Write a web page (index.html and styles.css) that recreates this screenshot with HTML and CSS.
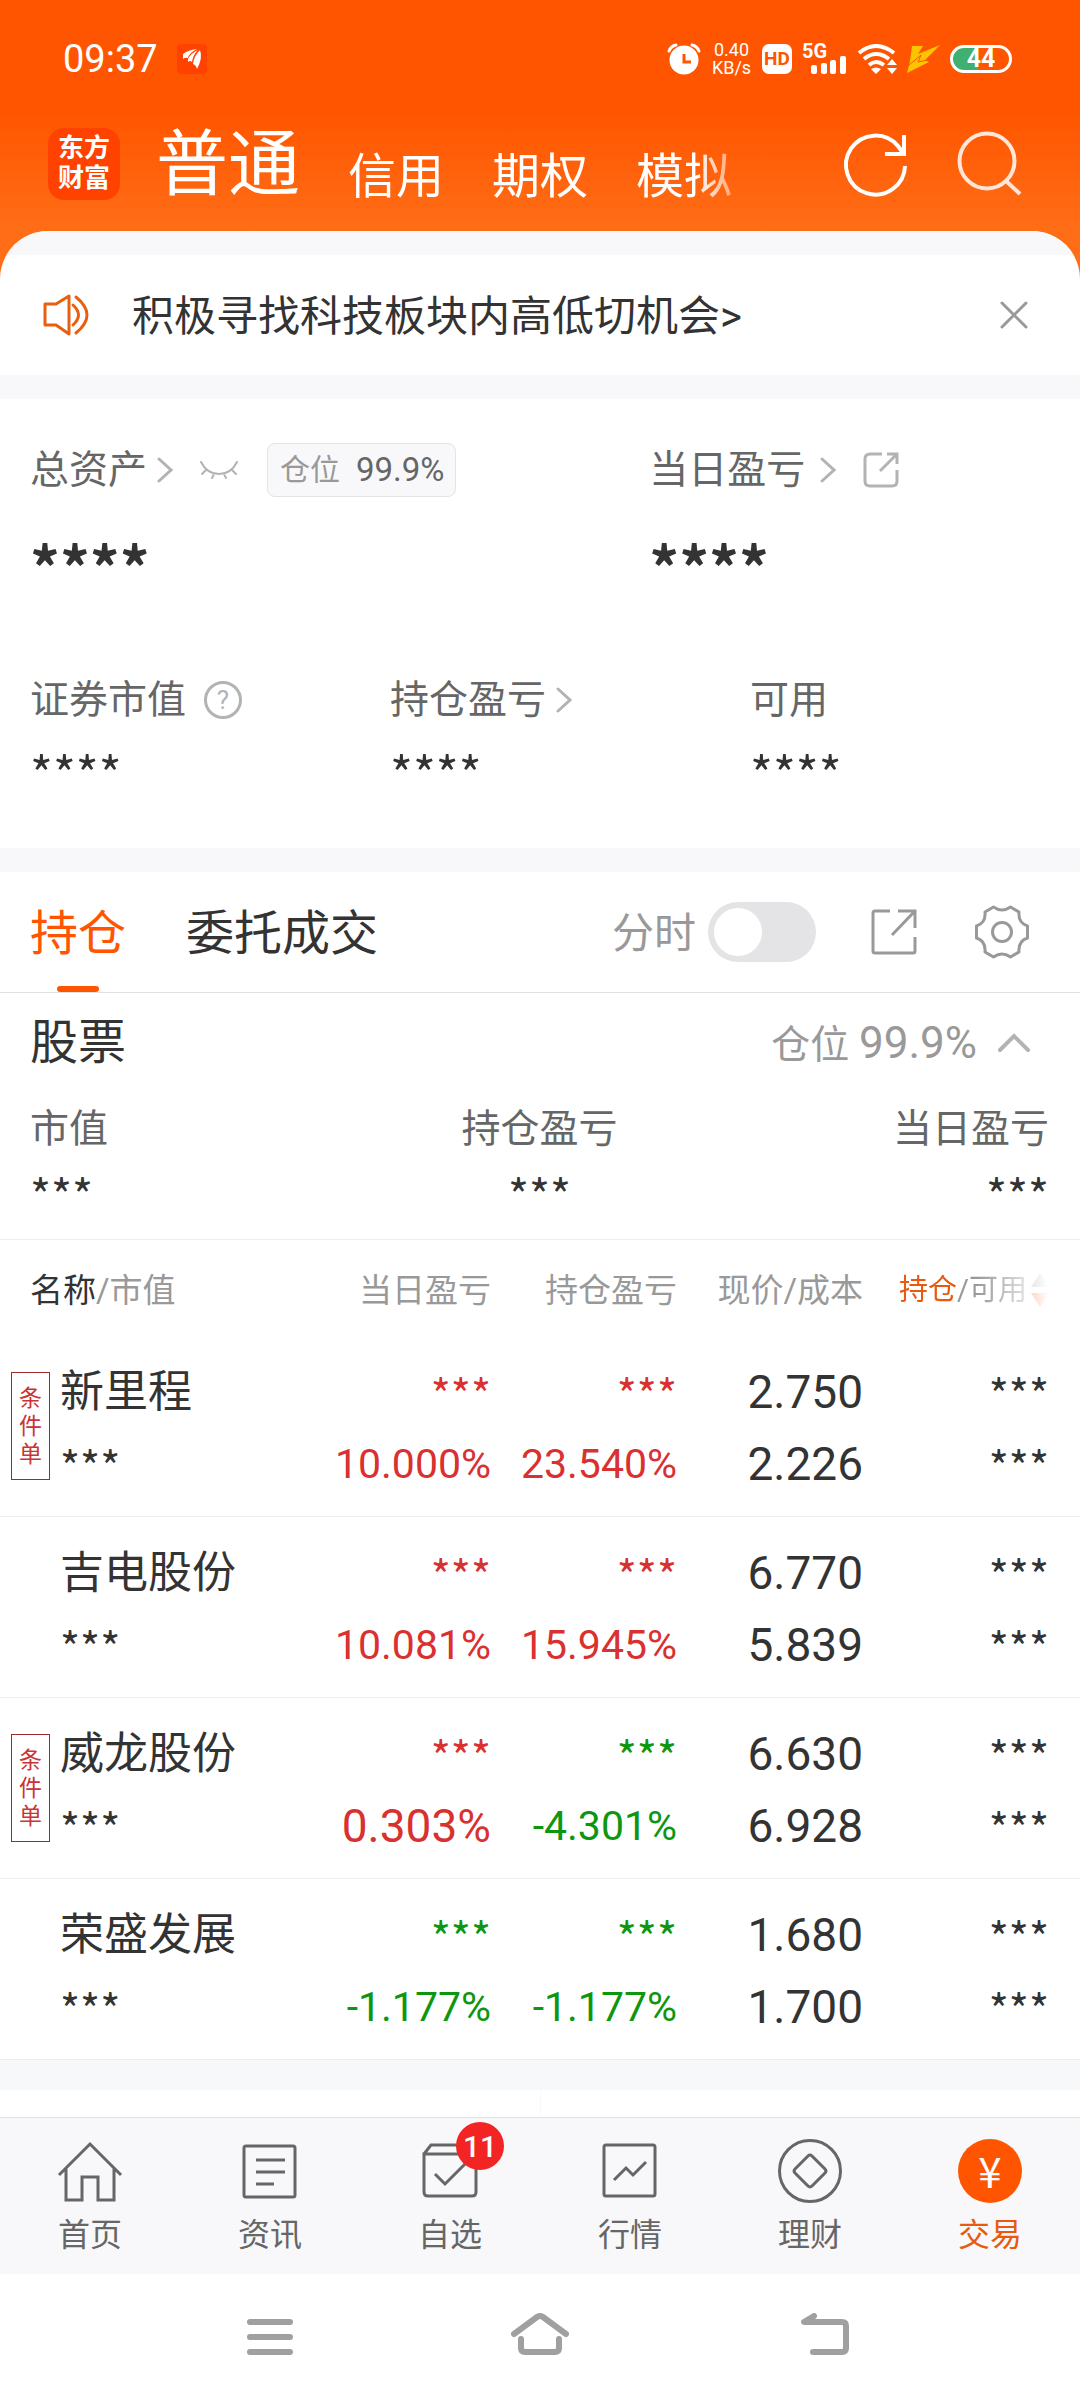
FILE: index.html
```
<!DOCTYPE html>
<html lang="zh">

<head>
    <meta charset="UTF-8">
    <meta name="viewport" content="width=device-width, initial-scale=1.0">
    <title>东方财富 - 交易</title>
    <link rel="stylesheet" href="styles.css">
</head>

<body>
    <!-- 状态栏 -->
    <div class="status-bar">
        <span class="time">09:37</span>
        <svg class="app-mark" width="30" height="30" viewBox="0 0 30 30">
            <rect width="30" height="30" rx="4" fill="#ff4200"/>
            <path d="M6 10Q11 6 20 5Q12 9 11 14Q8 13 6 15ZM11 15Q14 9 21 6Q16 11 15 18Q13 16 11 18ZM16 20Q17 12 23 6Q26 14 20 25Q19 21 16 20Z" fill="#fff"/>
        </svg>
        <div class="status-icons">
            <svg width="34" height="32" viewBox="0 0 34 32">
                <circle cx="17" cy="17" r="14.500" fill="#fff"/>
                <path d="M2 8Q4 3 9 2M32 8Q30 3 25 2" fill="none" stroke="#fff" stroke-width="3" stroke-linecap="round"/>
                <path d="M17 11V19H24" fill="none" stroke="#ff5500" stroke-width="3"/>
            </svg>
            <div class="speed"><span>0.40</span><span>KB/s</span></div>
            <span class="hd">HD</span>
            <span class="signal">
                <span class="net">5G</span>
                <svg width="36" height="18" viewBox="0 0 36 18" fill="#fff">
                    <rect x="0" y="9" width="6" height="9" rx="2"/>
                    <rect x="10" y="7" width="6" height="11" rx="2"/>
                    <rect x="19" y="4" width="6" height="14" rx="2"/>
                    <rect x="29" y="0" width="6" height="18" rx="2"/>
                </svg>
            </span>
            <svg width="40" height="30" viewBox="0 0 40 30">
                <path d="M2 9Q19 -5 37 9M7 15Q19 5 32 15M12 21Q19 15 27 21" fill="none" stroke="#fff" stroke-width="4"/>
                <path d="M14 25Q19 22 24 25L19 30ZM30 21L35 15L40 21ZM30 24H40L35 30Z" fill="#fff"/>
            </svg>
            <svg width="33" height="28" viewBox="0 0 33 28">
                <path d="M5 1H16L11 9L33 0L18 15L22 17L0 28L3 16Z" fill="#ffc400"/>
                <path d="M2 20L14 10L11 17L21 15" fill="none" stroke="#ff5500" stroke-width="1"/>
            </svg>
            <span class="battery">44</span>
        </div>
    </div>

    <!-- 顶部导航 -->
    <header class="header">
        <a class="logo" href="#">东方<br>财富</a>
        <nav class="account-tabs">
            <a class="active" href="#">普通</a>
            <a href="#">信用</a>
            <a href="#">期权</a>
            <a href="#">模拟</a>
        </nav>
        <button class="icon-btn" type="button" aria-label="刷新">
            <svg width="72" height="72" viewBox="0 0 72 72" fill="none" stroke="#fff" stroke-width="4">
                <path d="M65 38A29.500 29.500 0 1 1 58 18L63 25"/>
                <path d="M64 7V26H45"/>
            </svg>
        </button>
        <button class="icon-btn" type="button" aria-label="搜索">
            <svg width="72" height="72" viewBox="0 0 72 72" fill="none" stroke="#ffe6d8" stroke-width="4">
                <circle cx="33" cy="33" r="27.500"/>
                <path d="M52 53L66 66"/>
            </svg>
        </button>
    </header>

    <main class="panel">
        <!-- 公告 -->
        <section class="notice">
            <svg width="48" height="44" viewBox="0 0 48 44" fill="none" stroke="#e8600f" stroke-width="3" stroke-linejoin="round" stroke-linecap="round">
                <path d="M3 11H14L27 3V41L14 32H3ZM31 12Q42 22 31 32M34 4Q56 22 34 40"/>
            </svg>
            <a href="#">积极寻找科技板块内高低切机会&gt;</a>
            <button class="icon-btn" type="button" aria-label="关闭">
                <svg width="30" height="30" viewBox="0 0 30 30" stroke="#999" stroke-width="3" stroke-linecap="round">
                    <path d="M3 3L27 27M27 3L3 27"/>
                </svg>
            </button>
        </section>

        <!-- 资产 -->
        <section class="assets">
            <div class="assets-main">
                <div>
                    <div class="label">
                        <a href="#">总资产</a>
                        <svg class="chevron" width="16" height="26" viewBox="0 0 16 26"><path d="M2 2L14 13L2 24"/></svg>
                        <button class="icon-btn eye" type="button" aria-label="显示资产">
                            <svg width="40" height="20" viewBox="0 0 40 20" fill="none" stroke="#b3b3b3" stroke-width="2" stroke-linecap="round">
                                <path d="M2 2Q8 14 20 14Q32 14 38 2M7 10L3 14M15 14L13 18M25 14L27 18M33 10L37 14"/>
                            </svg>
                        </button>
                        <span class="position-badge">仓位 <b>99.9%</b></span>
                    </div>
                    <div class="mask mask-lg">****</div>
                </div>
                <div>
                    <div class="label">
                        <a href="#">当日盈亏</a>
                        <svg class="chevron chevron-wide" width="16" height="26" viewBox="0 0 16 26"><path d="M2 2L14 13L2 24"/></svg>
                        <button class="icon-btn share" type="button" aria-label="分享">
                            <svg width="36" height="36" viewBox="0 0 36 36" fill="none" stroke="#b3b3b3" stroke-width="3">
                                <path d="M19 2H7Q2 2 2 7V29Q2 34 7 34H29Q34 34 34 29V18M17 19L33 3M24 2H34V12"/>
                            </svg>
                        </button>
                    </div>
                    <div class="mask mask-lg">****</div>
                </div>
            </div>
            <div class="assets-sub">
                <div>
                    <div class="label">证券市值<button class="help" type="button">?</button></div>
                    <div class="mask mask-md">****</div>
                </div>
                <div>
                    <div class="label">
                        <a href="#">持仓盈亏</a>
                        <svg class="chevron" width="16" height="26" viewBox="0 0 16 26"><path d="M2 2L14 13L2 24"/></svg>
                    </div>
                    <div class="mask mask-md">****</div>
                </div>
                <div>
                    <div class="label">可用</div>
                    <div class="mask mask-md">****</div>
                </div>
            </div>
        </section>

        <!-- 持仓 / 委托 -->
        <div class="tabs">
            <a class="tab active" href="#">持仓</a>
            <a class="tab" href="#">委托成交</a>
            <label class="switch-label" for="minute">分时</label>
            <input class="switch" id="minute" type="checkbox">
            <button class="icon-btn" type="button" aria-label="分享持仓">
                <svg width="48" height="48" viewBox="0 0 48 48" fill="none" stroke="#999" stroke-width="3">
                    <path d="M20 3H5Q3 3 3 5V43Q3 45 5 45H43Q45 45 45 43V29M22 27L44 4M28 3H45V20"/>
                </svg>
            </button>
            <button class="icon-btn gear" type="button" aria-label="设置">
                <svg width="54" height="54" viewBox="0 0 54 54" fill="none" stroke="#999" stroke-width="3" stroke-linejoin="round">
                    <path d="M18.500 2Q27 8 35.500 2L44 7Q43 18 52.500 21V33Q43 36 44 47L35.500 52Q27 46 18.500 52L10 47Q11 36 1.500 33V21Q11 18 10 7Z"/>
                    <circle cx="27" cy="27" r="9.500"/>
                </svg>
            </button>
        </div>

        <section class="summary">
            <div class="summary-head">
                <h2>股票</h2>
                <span class="ratio">仓位 <b>99.9%</b></span>
                <button class="icon-btn" type="button" aria-label="收起">
                    <svg width="34" height="20" viewBox="0 0 34 20" fill="none" stroke="#b3b3b3" stroke-width="4" stroke-linecap="round">
                        <path d="M3 17L17 3L31 17"/>
                    </svg>
                </button>
            </div>
            <div class="summary-grid">
                <div>市值<div class="mask">***</div></div>
                <div>持仓盈亏<div class="mask">***</div></div>
                <div>当日盈亏<div class="mask">***</div></div>
            </div>
        </section>

        <table class="holdings">
            <colgroup>
                <col>
                <col class="num">
                <col class="num">
                <col class="num">
                <col class="last">
            </colgroup>
            <thead>
                <tr>
                    <th><em>名称</em>/市值</th>
                    <th>当日盈亏</th>
                    <th>持仓盈亏</th>
                    <th>现价/成本</th>
                    <th>
                        <div class="sort">
                            <span><i>持仓</i>/可用</span>
                            <svg width="18" height="34" viewBox="0 0 18 34"><path d="M9 0L18 14H0Z" fill="#999"/><path d="M9 34L0 20H18Z" fill="#ff5500"/></svg>
                        </div>
                    </th>
                </tr>
            </thead>
            <tbody>
                <tr>
                    <td>
                        <div class="stock">
                            <span class="tag">条件单</span>
                            <div class="name">新里程<div class="mask">***</div></div>
                        </div>
                    </td>
                    <td class="up"><div class="mask">***</div>10.000%</td>
                    <td class="up"><div class="mask">***</div>23.540%</td>
                    <td class="price">2.750<br>2.226</td>
                    <td><div class="mask">***</div><div class="mask">***</div></td>
                </tr>
                <tr>
                    <td>
                        <div class="stock">
                            <div class="name">吉电股份<div class="mask">***</div></div>
                        </div>
                    </td>
                    <td class="up"><div class="mask">***</div>10.081%</td>
                    <td class="up"><div class="mask">***</div>15.945%</td>
                    <td class="price">6.770<br>5.839</td>
                    <td><div class="mask">***</div><div class="mask">***</div></td>
                </tr>
                <tr>
                    <td>
                        <div class="stock">
                            <span class="tag">条件单</span>
                            <div class="name">威龙股份<div class="mask">***</div></div>
                        </div>
                    </td>
                    <td class="up large"><div class="mask">***</div>0.303%</td>
                    <td class="down"><div class="mask">***</div>-4.301%</td>
                    <td class="price">6.630<br>6.928</td>
                    <td><div class="mask">***</div><div class="mask">***</div></td>
                </tr>
                <tr>
                    <td>
                        <div class="stock">
                            <div class="name">荣盛发展<div class="mask">***</div></div>
                        </div>
                    </td>
                    <td class="down"><div class="mask">***</div>-1.177%</td>
                    <td class="down"><div class="mask">***</div>-1.177%</td>
                    <td class="price">1.680<br>1.700</td>
                    <td><div class="mask">***</div><div class="mask">***</div></td>
                </tr>
            </tbody>
        </table>
        <div class="next-card"><div></div><div></div></div>
    </main>

    <!-- 底部导航 -->
    <nav class="tabbar">
        <a href="#">
            <svg width="66" height="66" viewBox="0 0 66 66">
                <path d="M2 37L33 6L64 37M9 31V62H25V39H41V62H57V31"/>
            </svg>
            首页
        </a>
        <a href="#">
            <svg width="66" height="66" viewBox="0 0 66 66">
                <rect x="7" y="8" width="51" height="51" rx="2"/>
                <path d="M19 22H48M19 34H48M19 46H37"/>
            </svg>
            资讯
        </a>
        <a href="#">
            <svg width="66" height="66" viewBox="0 0 66 66">
                <path d="M7 16V54Q7 58 11 58H55Q59 58 59 54V16ZM7 16L14 7H52L59 16M18 36L28 46L48 26"/>
            </svg>
            自选
            <span class="badge">11</span>
        </a>
        <a href="#">
            <svg width="66" height="66" viewBox="0 0 66 66">
                <rect x="7" y="7" width="51" height="51" rx="2"/>
                <path d="M17 42L29 30L36 37L49 24"/>
            </svg>
            行情
        </a>
        <a href="#">
            <svg width="66" height="66" viewBox="0 0 66 66">
                <circle cx="33" cy="33" r="30.500"/>
                <path d="M31 18Q33 16 35 18L48 31Q50 33 48 35L35 48Q33 50 31 48L18 35Q16 33 18 31Z"/>
            </svg>
            理财
        </a>
        <a class="active" href="#">
            <span class="yen">¥</span>
            交易
        </a>
    </nav>

    <!-- 系统按键 -->
    <div class="system-nav">
        <button class="icon-btn" type="button" aria-label="菜单">
            <svg width="60" height="48" viewBox="0 0 60 48"><path d="M10 9H50M10 24H50M10 39H50"/></svg>
        </button>
        <button class="icon-btn" type="button" aria-label="主页">
            <svg width="60" height="48" viewBox="0 0 60 48"><path d="M4 21L27 4Q30 2 33 4L56 21M11 26V35Q11 39 15 39H45Q49 39 49 35V26"/></svg>
        </button>
        <button class="icon-btn" type="button" aria-label="返回">
            <svg width="90" height="48" viewBox="0 0 90 48"><path d="M49 3L39 9H77Q81 9 81 13V35Q81 39 77 39H48"/></svg>
        </button>
    </div>
</body>

</html>
```

FILE: styles.css
```
* {
    box-sizing: border-box;
}

body {
    margin: 0;
    font-family: Roboto, "Noto Sans CJK SC", sans-serif;
    line-height: 1.2;
    color: #333;
    background: #fff linear-gradient(#ff5500 110px, #ff6e17 232px) no-repeat;
    background-size: 100% 300px;
}

a {
    color: inherit;
    text-decoration: none;
}

svg {
    display: block;
    flex: none;
}

b,
em,
i {
    font-weight: 400;
    font-style: normal;
}

.icon-btn {
    padding: 0;
    border: 0;
    background: none;
}

/* Hidden amounts */
.mask {
    font-family: "Noto Sans CJK SC", sans-serif;
    font-size: 43px;
}

/* Status bar */
.status-bar {
    display: flex;
    align-items: center;
    padding: 34px 68px 0 63px;
    height: 84px;
    color: #fff;
}

.time {
    font-size: 38px;
    line-height: 48px;
}

.app-mark {
    margin-left: 19px;
}

.status-icons {
    display: flex;
    align-items: center;
    gap: 10px;
    margin-left: auto;
}

.speed {
    display: flex;
    flex-direction: column;
    width: 41px;
    font-size: 18px;
    line-height: 18px;
    text-align: center;
}

.hd {
    width: 30px;
    border-radius: 7px;
    background: #fff;
    color: #ff5500;
    font-size: 19px;
    font-weight: 700;
    line-height: 30px;
    text-align: center;
}

.signal {
    display: flex;
    flex-direction: column;
    align-items: flex-end;
    width: 45px;
}

.net {
    align-self: flex-start;
    height: 12px;
    font-size: 20px;
    font-weight: 700;
    line-height: 14px;
}

.battery {
    width: 62px;
    border: 3px solid #fff;
    border-radius: 14px;
    background: linear-gradient(to right, #3fb070 44%, #ff5500 44%);
    font-size: 25px;
    font-weight: 700;
    line-height: 22px;
    text-align: center;
}

/* Header */
.header {
    display: flex;
    align-items: center;
    padding: 12px 54px 0 48px;
    height: 147px;
}

.logo {
    width: 72px;
    height: 72px;
    padding-top: 5px;
    border-radius: 16px;
    background: #ff4200;
    color: #fff;
    font-size: 26px;
    font-weight: 700;
    line-height: 30px;
    text-align: center;
}

.account-tabs {
    display: flex;
    flex: 1;
    align-items: flex-end;
    gap: 48px;
    margin: 0 80px 0 36px;
    padding: 10px 0 8px;
    overflow: hidden;
    color: #fff;
    font-size: 48px;
    line-height: 48px;
    white-space: nowrap;
    -webkit-mask-image: linear-gradient(to left, transparent, #000 64px);
    mask-image: linear-gradient(to left, transparent, #000 64px);
}

.account-tabs .active {
    font-size: 72px;
    line-height: 72px;
}

.header .icon-btn + .icon-btn {
    margin-left: 42px;
}

.panel {
    overflow: hidden;
    border-radius: 48px 48px 0 0;
    background: #fff;
}

/* Notice */
.notice {
    display: flex;
    align-items: center;
    padding: 0 51px 0 42px;
    border-top: 24px solid #f8f8fa;
    height: 144px;
    font-size: 42px;
}

.notice a {
    flex: 1;
    padding: 4px 0 0 42px;
}

/* Assets */
.assets {
    padding: 43px 30px 48px;
    border: solid #f8f8fa;
    border-width: 24px 0;
}

.assets-main {
    display: grid;
    grid-template-columns: 17fr 11fr;
}

.assets-sub {
    display: grid;
    grid-template-columns: 6fr 6fr 5fr;
    margin-top: 64px;
}

.label {
    display: flex;
    align-items: center;
    height: 56px;
    color: #666;
    font-size: 39px;
}

.chevron {
    margin-left: 10px;
    fill: none;
    stroke: #b3b3b3;
    stroke-width: 3;
    stroke-linecap: round;
}

.chevron-wide {
    margin-left: 15px;
}

.eye {
    margin-left: 26px;
}

.share {
    margin-left: 27px;
}

.position-badge {
    display: flex;
    align-items: center;
    gap: 16px;
    height: 54px;
    margin-left: 28px;
    padding: 0 10px 0 12px;
    border: 1px solid #e4e4e6;
    border-radius: 8px;
    background: #f8f8fa;
    color: #999;
    font-size: 30px;
}

.position-badge b {
    color: #666;
    font-size: 33px;
}

.help {
    width: 38px;
    height: 38px;
    margin-left: 18px;
    padding: 0;
    border: 3px solid #b3b3b3;
    border-radius: 50%;
    background: none;
    color: #b3b3b3;
    font: 26px/32px Roboto, sans-serif;
}

.mask-lg {
    margin-top: 26px;
    font-size: 59px;
    font-weight: 700;
    line-height: 84px;
}

.mask-md {
    margin-top: 16px;
    font-size: 49px;
    line-height: 56px;
}

/* Tabs */
.tabs {
    display: flex;
    align-items: center;
    height: 121px;
    padding: 0 51px 0 30px;
    border-bottom: 1px solid #e0e0e0;
}

.tab {
    display: flex;
    align-items: center;
    align-self: stretch;
    margin-right: 60px;
    padding-top: 4px;
    font-size: 48px;
}

.tab.active {
    position: relative;
    color: #ff5500;
}

.tab.active::after {
    content: "";
    position: absolute;
    bottom: 0;
    left: 50%;
    width: 42px;
    height: 6px;
    margin-left: -21px;
    border-radius: 3px;
    background: #ff5500;
}

.switch-label {
    margin-left: auto;
    padding-top: 4px;
    color: #999;
    font-size: 42px;
}

.switch {
    appearance: none;
    width: 108px;
    height: 60px;
    margin: 0 54px 0 12px;
    padding: 6px;
    border-radius: 30px;
    background: #e4e4e6;
}

.switch::before {
    content: "";
    display: block;
    width: 48px;
    height: 48px;
    border-radius: 50%;
    background: #fff;
}

.switch:checked {
    padding-left: 54px;
    background: #ff5500;
}

.gear {
    margin-left: 57px;
}

/* Stock summary */
.summary {
    padding: 14px 31px 16px 30px;
    border-bottom: 1px solid #eee;
}

.summary-head {
    display: flex;
    align-items: center;
    height: 72px;
    padding-right: 18px;
}

.summary-head h2 {
    flex: 1;
    margin: 0;
    font-size: 48px;
    font-weight: 400;
}

.ratio {
    margin-right: 20px;
    color: #999;
    font-size: 39px;
}

.ratio b {
    font-size: 44px;
}

.summary-grid {
    display: grid;
    grid-template-columns: repeat(3, 1fr);
    padding-top: 20px;
    color: #666;
    font-size: 39px;
    line-height: 60px;
    text-align: center;
}

.summary-grid > :first-child {
    text-align: left;
}

.summary-grid > :last-child {
    text-align: right;
}

.summary-grid .mask {
    margin-top: 5px;
    color: #333;
    font-size: 45px;
    line-height: 59px;
}

/* Holdings */
.holdings {
    width: 100%;
    table-layout: fixed;
    border-collapse: collapse;
}

.holdings .num {
    width: 186px;
}

.holdings .last {
    width: 217px;
}

.holdings th {
    height: 96px;
    padding: 5px 0 0;
    color: #999;
    font-size: 33px;
    font-weight: 400;
    text-align: right;
    white-space: nowrap;
}

.holdings th:first-child {
    padding-left: 30px;
    text-align: left;
}

.holdings th:last-child,
.holdings td:last-child {
    padding-right: 31px;
}

.holdings em {
    color: #333;
}

.holdings i {
    color: #e85a10;
}

.sort {
    display: flex;
    align-items: center;
    justify-content: flex-end;
    gap: 4px;
    font-size: 29px;
    -webkit-mask-image: linear-gradient(to left, transparent, rgba(0, 0, 0, 0.25) 20px, #000 72px);
    mask-image: linear-gradient(to left, transparent, rgba(0, 0, 0, 0.25) 20px, #000 72px);
}

.holdings td {
    padding: 20px 0 16px;
    border-bottom: 1px solid #eee;
    font-size: 41px;
    line-height: 72px;
    text-align: right;
    vertical-align: top;
}

.holdings .price,
.holdings .large {
    font-size: 46px;
}

.holdings .up {
    color: #d93030;
}

.holdings .down {
    color: #0f960f;
}

.stock {
    display: flex;
    align-items: center;
    padding-left: 11px;
    text-align: left;
}

.name {
    flex: 1;
    margin-left: 49px;
    font-size: 44px;
}

.tag {
    width: 39px;
    margin-bottom: 4px;
    padding: 12px 6px 10px;
    border: 1px solid #9c2c2c;
    color: #cc3333;
    font-size: 23px;
    line-height: 28px;
    text-align: center;
}

.tag + .name {
    margin-left: 10px;
}

.next-card {
    display: flex;
    height: 57px;
    border-top: 30px solid #f7f8fa;
}

.next-card div {
    flex: 1;
}

.next-card div + div {
    border-left: 1px solid #f8f8f8;
}

/* Bottom tab bar */
.tabbar {
    display: flex;
    border-top: 1px solid #e0e0e0;
    background: #f8f8fa;
}

.tabbar a {
    position: relative;
    display: flex;
    flex: 1;
    flex-direction: column;
    align-items: center;
    height: 156px;
    padding-top: 20px;
    color: #666;
    font-size: 32px;
    line-height: 62px;
}

.tabbar svg {
    fill: none;
    stroke: #666;
    stroke-width: 3;
}

.tabbar .active {
    color: #e85a10;
}

.yen {
    width: 64px;
    height: 64px;
    margin: 1px;
    border-radius: 50%;
    background: #ff5500;
    color: #fff;
    font-family: "Noto Sans CJK SC", sans-serif;
    font-size: 42px;
    line-height: 62px;
    text-align: center;
}

/* Unread count */
.badge {
    position: absolute;
    top: 4px;
    left: 50%;
    width: 48px;
    height: 48px;
    margin-left: 6px;
    border-radius: 50%;
    background: #f22424;
    color: #fff;
    font-size: 30px;
    font-weight: 500;
    line-height: 50px;
    text-align: center;
}

/* System buttons */
.system-nav {
    display: flex;
    height: 126px;
    padding: 0 135px;
}

.system-nav button {
    flex: 1 1 0;
}

.system-nav svg {
    margin: 0 auto;
    fill: none;
    stroke: #a0a0a0;
    stroke-width: 6;
    stroke-linecap: round;
    stroke-linejoin: round;
}
```
